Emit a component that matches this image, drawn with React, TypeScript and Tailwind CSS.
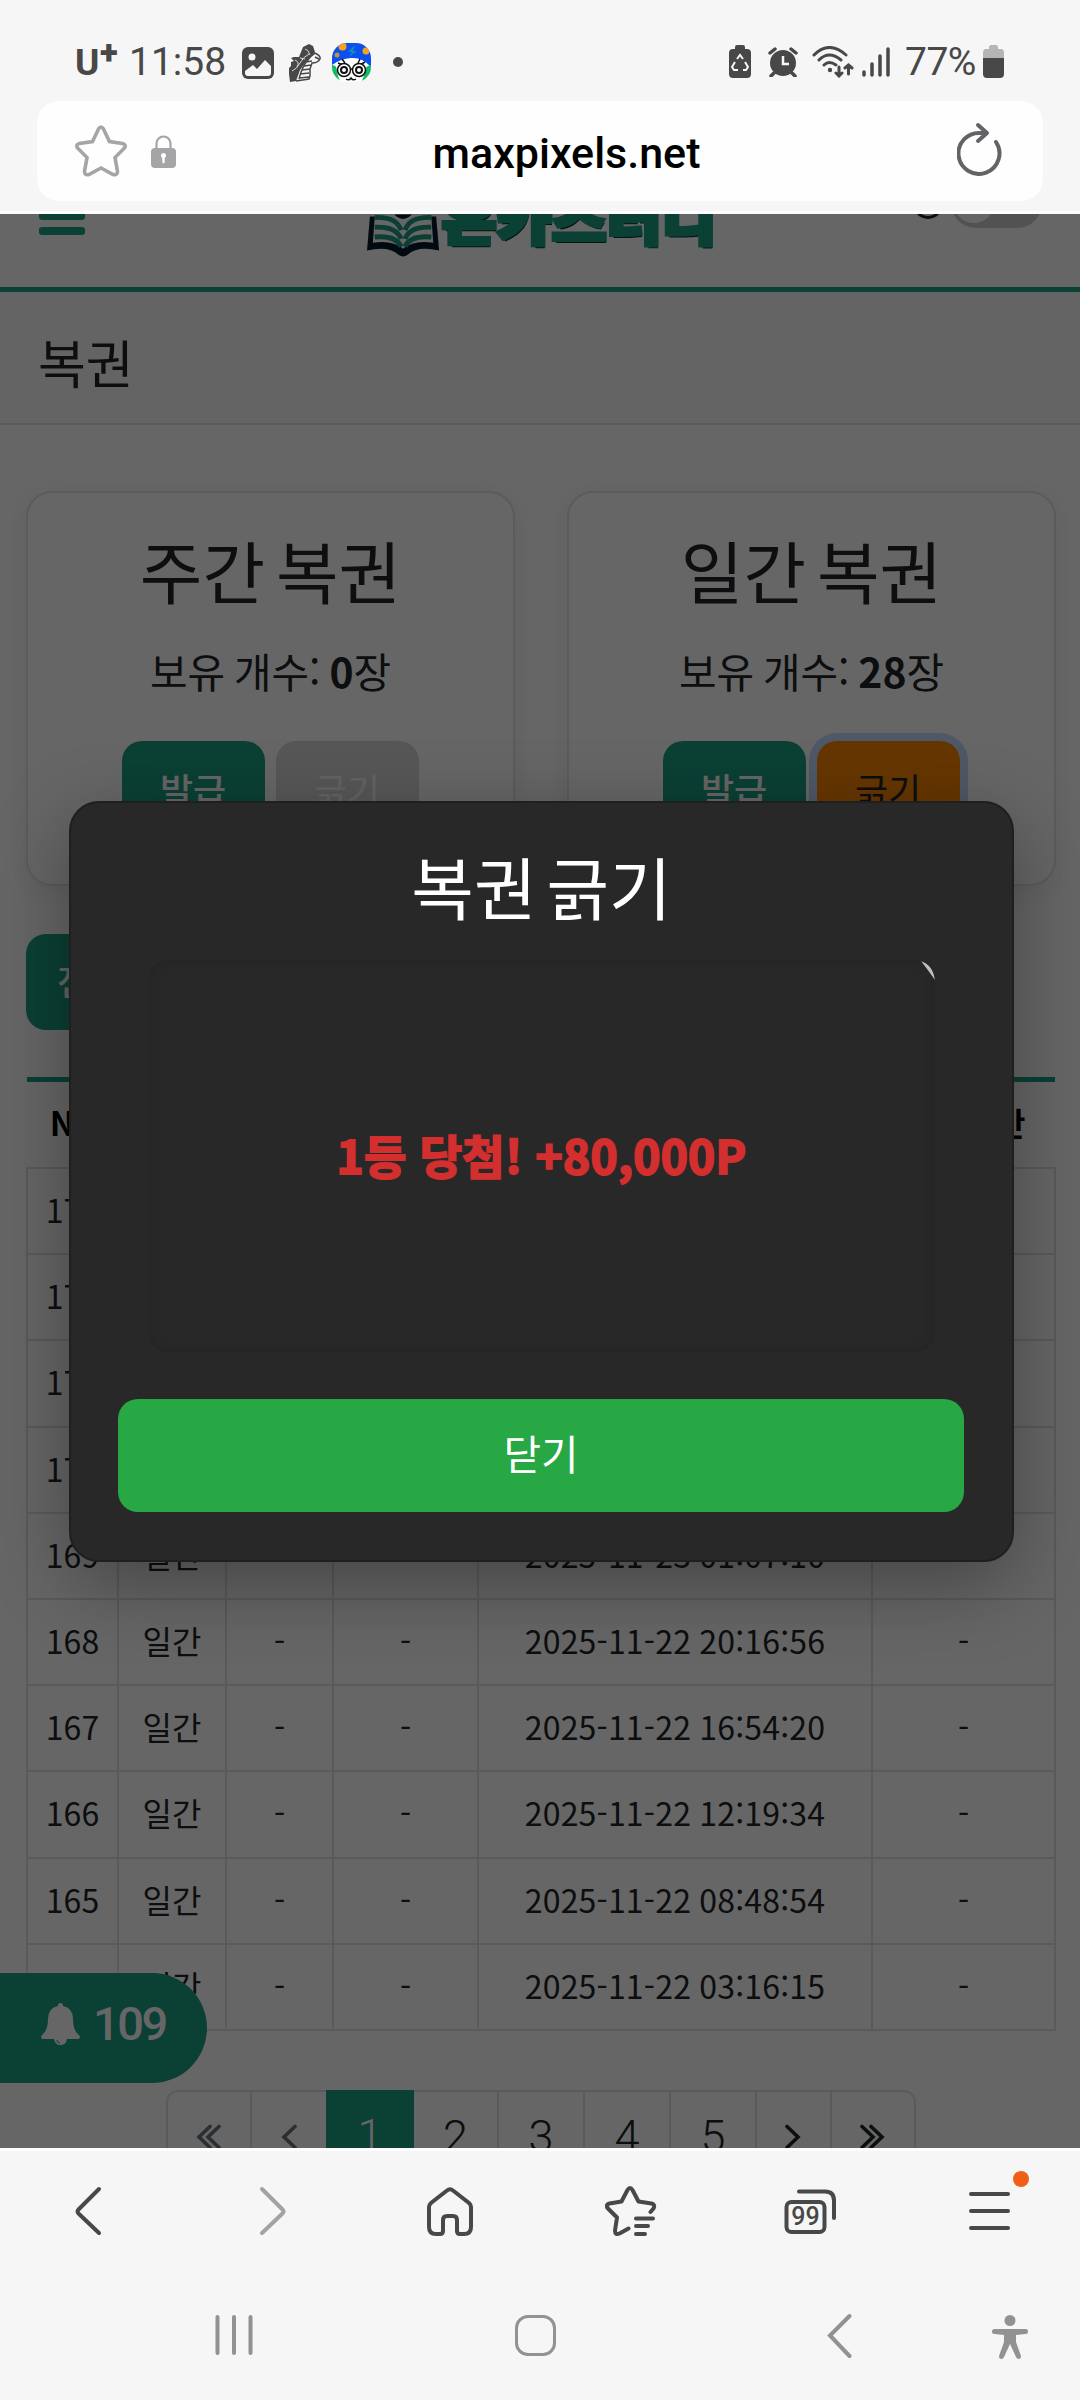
import React from "react";
import clsx from "clsx";

const KR = "font-['Noto_Sans_CJK_KR',sans-serif]";

const history = [
  { no: 173, date: "2025-11-24 08:31:12" },
  { no: 172, date: "2025-11-23 21:45:20" },
  { no: 171, date: "2025-11-23 16:22:08" },
  { no: 170, date: "2025-11-23 11:20:31" },
  { no: 169, date: "2025-11-23 01:07:10" },
  { no: 168, date: "2025-11-22 20:16:56" },
  { no: 167, date: "2025-11-22 16:54:20" },
  { no: 166, date: "2025-11-22 12:19:34" },
  { no: 165, date: "2025-11-22 08:48:54" },
  { no: 164, date: "2025-11-22 03:16:15" },
];

const columns = "grid grid-cols-[91px_108px_107px_145px_394px_183px]";

function StatusBar() {
  return (
    <div className="flex h-[101px] items-start pt-[43px] pl-[75px] text-[#484848] font-['Roboto',sans-serif]">
      <span className="text-[37px] font-bold leading-[36px] mt-[2px] w-[25px]">
        U
      </span>
      <span className="text-[33px] font-black leading-[20px] w-[18px]">+</span>
      <span className="text-[39px] leading-[38px] w-[98px] ml-[11px]">
        11:58
      </span>
      <svg className="w-8 h-8 mt-1 ml-[15px]" viewBox="0 0 32 32">
        <rect width="32" height="32" rx="6" fill="#484848" />
        <circle cx="10" cy="10" r="3.5" fill="#f6f6f6" />
        <path
          d="M3 24l8-6 4 4 8-9 6 6v7a3 3 0 0 1-3 3H6a3 3 0 0 1-3-3z"
          fill="#f6f6f6"
        />
      </svg>
      <svg className="w-8 h-10 ml-[15px]" viewBox="0 0 32 40">
        <path
          d="M0 25l2-2v-4l3-1-3-3 3-1 5 0 4-10 6-3 4 2 2 6-3 4-7 7-5 7-4 11-6 1-1-8z"
          fill="#484848"
        />
        <path
          d="M26 10q6 3 5 6-2 4-8 4l-2 6v7l-1 3-13 2M26 10q-5 3-8 8-5 6-8 18M23 18l-6 1M22 22l-7 1M21 26l-8 1M20 30l-9 1M20 34l-10 1M26 14l4 2"
          fill="none"
          stroke="#484848"
          strokeWidth="1.500"
        />
        <path
          d="M16 6q3 0 5 6M6 17q5 2 2 7M3 28q5-2 8-8t9-9M11 15l5 1"
          fill="none"
          stroke="#d8d8d8"
          strokeWidth="1"
        />
      </svg>
      <svg className="w-[39px] h-[39px] ml-[11px]" viewBox="0 0 39 39">
        <clipPath id="avatar">
          <rect width="39" height="39" rx="15" />
        </clipPath>
        <g clipPath="url(#avatar)">
          <rect width="39" height="39" fill="#fff" />
          <path d="M0 0h39v24Q30 14 19 15T0 22z" fill="#0b50ee" />
          <path
            d="M0 22q5 0 5 6 1 7 4 11H0zM39 22q-6 1-6 6-1 7-4 11h10z"
            fill="#12bd62"
          />
          <circle cx="10.500" cy="3.500" r="4" fill="#f2a51c" />
          <circle cx="34" cy="8" r="3.500" fill="#f2a51c" />
          <circle cx="5" cy="12" r="2.500" fill="#b8963f" />
          <path d="M23 2l-7 7h4l-3 5 8-6h-4z" fill="#0d8fb8" />
          <path
            d="M6 20l5 2M10 16l3 4M33 19l-5 3M28 16l-2 4"
            stroke="#111"
            strokeWidth="1.500"
          />
          <g fill="#fff" stroke="#111" strokeWidth="1.500">
            <circle cx="12" cy="27" r="6.500" />
            <circle cx="27" cy="27" r="6.500" />
            <circle cx="12" cy="27" r="3" strokeWidth="2" />
            <circle cx="27" cy="27" r="3" strokeWidth="2" />
          </g>
          <path
            d="M14 36q3 2 5-1 2 3 5 1M18 26h3"
            fill="none"
            stroke="#111"
            strokeWidth="1.500"
          />
        </g>
      </svg>
      <span className="size-[10px] rounded-full bg-[#484848] mt-[14px] ml-[22px]" />

      <div className="ml-auto mr-[76px] flex items-start">
        <svg className="w-[22px] h-[33px] mt-[2px]" viewBox="0 0 22 33">
          <path
            d="M6 4V2q0-2 2-2h6q2 0 2 2v2h2q4 0 4 4v21q0 4-4 4H4q-4 0-4-4V8q0-4 4-4z"
            fill="#484848"
          />
          <path d="M11 13l5 8h-3v4H9v-4H6z" fill="#484848" />
          <path
            d="M8 14l3-4 3 4M16 17l3 5-2 3h-3M9 25H5l-2-3 3-5"
            fill="none"
            stroke="#f6f6f6"
            strokeWidth="2"
          />
        </svg>
        <svg className="w-[30px] h-[30px] mt-1 ml-[17px]" viewBox="0 0 30 30">
          <circle cx="15" cy="16" r="13" fill="#484848" />
          <path
            d="M2 6l5-4M28 6l-5-4M6 26l-3 3M24 26l3 3"
            stroke="#484848"
            strokeWidth="3.500"
            strokeLinecap="round"
          />
          <path
            d="M15 9v8h6"
            fill="none"
            stroke="#f6f6f6"
            strokeWidth="2.500"
          />
        </svg>
        <svg className="w-[42px] h-8 mt-[3px] ml-[14px]" viewBox="0 0 42 32">
          <g
            fill="none"
            stroke="#484848"
            strokeWidth="3"
            strokeLinecap="round"
          >
            <path d="M2 9q15-15 32 0M7 14q10-10 22 0M12 19q5-5 12 0" />
            <path d="M27 21v9M24 27l3 3 3-3M36.500 28V19M33 22l3.500-3 3.500 3" />
          </g>
          <circle cx="18" cy="24" r="2.200" fill="#484848" />
        </svg>
        <svg className="w-7 h-[30px] mt-1 ml-[8px]" viewBox="0 0 28 30">
          <path
            d="M2 25v3M10 17v11M18 9v19M26 2v26"
            stroke="#484848"
            strokeWidth="3.500"
            strokeLinecap="round"
          />
        </svg>
        <span className="text-[39px] leading-[38px] w-[78px] ml-[15px] tracking-[-0.5px]">
          77%
        </span>
        <svg className="w-[21px] h-[33px] mt-[2px]" viewBox="0 0 21 33">
          <path
            d="M6 4V2q0-2 2-2h5q2 0 2 2v2h3q3 0 3 4v6H0V8q0-4 3-4z"
            fill="#b5b5b5"
          />
          <path d="M0 13h21v16q0 4-4 4H4q-4 0-4-4z" fill="#484848" />
        </svg>
      </div>
    </div>
  );
}

function AddressBar() {
  return (
    <div className="h-[113px] border-b-[3px] border-[#fdfdfd] px-[37px]">
      <div className="flex h-[100px] items-center rounded-[22px] bg-[#fefefe] px-[38px]">
        <svg className="w-[52px] h-[52px]" viewBox="0 0 52 52">
          <path
            d="M23.500 4q2.500-4 5 0l6 12.500 13 2q4 1 2 4.500l-9.500 9.500 2.500 14q0 4-4.500 3L26 43l-12 6.500q-4.500 1-4.500-3L12 32.500 2.500 23q-2-3.500 2-4.500l13-2z"
            fill="none"
            stroke="#a5a5a7"
            strokeWidth="3.600"
          />
        </svg>
        <svg className="w-[25px] h-[33px] ml-6" viewBox="0 0 25 33">
          <path
            d="M5.500 14V8.500a7 7 0 0 1 14 0V14"
            fill="none"
            stroke="#a5a5a7"
            strokeWidth="2.200"
          />
          <rect y="13" width="25" height="20" rx="4" fill="#a5a5a7" />
          <circle cx="12.500" cy="20.500" r="2.500" fill="#fff" />
          <path
            d="M12.500 21v6"
            stroke="#fff"
            strokeWidth="2.500"
            strokeLinecap="round"
          />
        </svg>
        <span className="mt-[4px] flex-1 text-center font-['Roboto',sans-serif] text-[43px] font-medium text-black">
          maxpixels.net
        </span>
        <svg className="w-[46px] h-[54px] mr-[2px] -mt-1" viewBox="0 0 46 54">
          <g
            fill="none"
            stroke="#636367"
            strokeWidth="4"
            strokeLinecap="round"
            strokeLinejoin="round"
          >
            <path d="M39 20a20.500 20.500 0 1 1-15-9h5" />
            <path d="M21 3l9 8-9 8" />
          </g>
        </svg>
      </div>
    </div>
  );
}

function SiteHeader() {
  return (
    <header className="h-[78px] overflow-hidden border-b-[5px] border-[#1ca083] bg-white">
      <div className="flex h-[73px] items-start">
        <div className="ml-[39px] w-[46px]">
          <div className="h-[6px] rounded-b-[3px] bg-[#1ca083]" />
          <div className="mt-[7px] h-2 rounded-[3px] bg-[#1ca083]" />
        </div>
        <div className="ml-[282px] flex w-[350px] items-start">
          <svg className="w-[74px] h-[44px]" viewBox="0 0 74 44">
            <path
              d="M3 2L0 37q22-5 32 4 5 4 10 0 10-9 32-4L71 2h-5l2 27q-20-3-31 6-11-9-31-6L8 2z"
              fill="#061a2c"
            />
            <path d="M28 0q9 9 18 0z" fill="#061a2c" />
            <g fill="none" stroke="#1f9c82" strokeWidth="5">
              <path d="M8 3q22-1 27 13M66 3Q44 2 39 16" />
              <path d="M8 13q22-1 27 12M66 13q-22-1-27 12" />
              <path d="M8 23q22-2 27 10M66 23q-22-2-27 10" />
            </g>
          </svg>
          <span
            className={clsx(
              KR,
              "-mt-[46px] ml-[3px] origin-bottom scale-y-[0.83] whitespace-nowrap text-[59px] font-black leading-[88px] tracking-[0.700px] text-[#1ca083] [-webkit-text-stroke:5px_#1ca083] [text-shadow:1px_1px_0_#6ab5a4,-1px_-1px_0_#6ab5a4,1px_-1px_0_#6ab5a4,-1px_1px_0_#6ab5a4,2px_3px_0_#06382c]"
            )}
          >
            온카스터디
          </span>
        </div>
        <div className="-mt-[25px] ml-[196px] size-[30px] rounded-full border-[3px] border-[#212529]" />
        <div className="-mt-[36px] ml-[8px] h-[50px] w-[91px] rounded-full bg-[#cccccc] p-[5px] pl-[3px]">
          <div className="size-[40px] rounded-full bg-white" />
        </div>
      </div>
    </header>
  );
}

type CardProps = {
  title: string;
  count: number;
  active?: boolean;
};

function LotteryCard({ title, count, active }: CardProps) {
  return (
    <div className="h-[395px] w-[489px] rounded-[26px] border-2 border-[#e3e4e6] bg-white text-center text-[#212529] shadow-[0_6px_26px_rgba(0,0,0,0.07)]">
      <h2 className="mt-[35px] text-[68px] leading-[83px] [word-spacing:-8px]">
        {title}
      </h2>
      <p className="mt-[35px] text-[40.800px] leading-[50px] [word-spacing:-2.500px]">
        보유 개수: <b>{count}</b>장
      </p>
      <div className="mt-[45px] flex justify-center gap-[11px] pr-[1px] text-[36px] leading-[97px]">
        <button className="h-[104px] w-[143px] rounded-[20px] bg-[#1ca083] pb-[7px] font-medium text-white">
          발급
        </button>
        <button
          className={clsx(
            "h-[104px] w-[143px] rounded-[20px] pb-[7px]",
            active
              ? "bg-[#ff8800] text-[#212529] ring-8 ring-[#c2dbff]"
              : "bg-[#dadada] text-[#f7f7f7]"
          )}
        >
          긁기
        </button>
      </div>
    </div>
  );
}

function HistoryTable() {
  return (
    <div className="mt-[47px] ml-[26px] w-[1030px] text-center text-[32px] text-[#212529]">
      <div
        className={clsx(
          columns,
          "ml-px mr-px border-t-[5px] border-[#1ca083] text-[33px] font-bold leading-[80px] h-[90px] text-black"
        )}
      >
        <span>No</span>
        <span>구분</span>
        <span>등수</span>
        <span>포인트</span>
        <span>발급 시간</span>
        <span className="text-[32px] [word-spacing:-3px]">사용 시간</span>
      </div>
      <div className="border-t-2 border-l-2 border-[#dee2e6]">
        {history.map(({ no, date }) => (
          <div
            key={no}
            className={clsx(
              columns,
              "h-[86.200px] leading-[80px] [&>span]:border-r-2 [&>span]:border-b-2 [&>span]:border-[#dee2e6]"
            )}
          >
            <span>{no}</span>
            <span>일간</span>
            <span>-</span>
            <span>-</span>
            <span className="tracking-[0.200px] [word-spacing:-1px]">
              {date}
            </span>
            <span>-</span>
          </div>
        ))}
      </div>
    </div>
  );
}

function Chevrons({ double, flip }: { double?: boolean; flip?: boolean }) {
  return (
    <svg
      className={clsx(
        "h-[28px]",
        double ? "w-[26px]" : "w-[17px]",
        flip && "-scale-x-100"
      )}
      viewBox={double ? "0 0 26 28" : "0 0 17 28"}
      fill="none"
      stroke={flip ? "#212529" : "#6c757d"}
      strokeWidth="3.600"
      strokeLinecap="round"
    >
      <path d="M14 3.500L3 14l11 10.500" />
      {double && <path d="M23 3.500L12 14l11 10.500" />}
    </svg>
  );
}

function Pagination() {
  return (
    <div className="mt-[59px] ml-[166px] flex h-[94px] w-[750px] rounded-[12px] border-2 border-[#dee2e6] text-[45px] font-light leading-[90px] text-[#212529] font-['Roboto',sans-serif] [&>div]:flex [&>div]:items-center [&>div]:justify-center [&>div]:border-[#dee2e6]">
      <div className="w-[84px] border-r-2">
        <Chevrons double />
      </div>
      <div className="w-[74px]">
        <Chevrons />
      </div>
      <div className="-mt-[2px] w-[88px] bg-[#1ca083] text-white">1</div>
      <div className="w-[85px] border-r-2">2</div>
      <div className="w-[86px] border-r-2">3</div>
      <div className="w-[86px] border-r-2">4</div>
      <div className="w-[86px] border-r-2">5</div>
      <div className="w-[75px] border-r-2 pr-[3px]">
        <Chevrons flip />
      </div>
      <div className="flex-1 pr-[3px]">
        <Chevrons double flip />
      </div>
    </div>
  );
}

function NoticeBadge() {
  return (
    <div className="absolute left-0 top-[1759px] flex h-[110px] w-[207px] items-center rounded-r-full bg-[#1ca083] pl-[41px] text-white">
      <svg className="-mt-[8px] h-[43px] w-[39px]" viewBox="0 0 39 43">
        <path
          d="M19.500 0q2.500 0 2.500 3 10 2 10 13 0 11 5 15 2 2 2 3 0 2-2 2H26q-1 6-6.500 6T13 36H2q-2 0-2-2 0-1 2-3 5-4 5-15Q7 5 17 3q0-3 2.500-3z"
          fill="#fff"
        />
        <path
          d="M16 37q0 3 3 3"
          fill="none"
          stroke="#1ca083"
          strokeWidth="1"
        />
      </svg>
      <span className="-mt-[7px] ml-[13px] font-['Roboto',sans-serif] text-[47px] font-medium tracking-[-2.500px]">
        109
      </span>
    </div>
  );
}

function ScratchModal() {
  return (
    <div className="absolute inset-0 flex items-start justify-center bg-black/60 pt-[587px] pl-[3px]">
      <div className="flex h-[761px] w-[945px] flex-col rounded-[30px] border-2 border-[#1f1f1f] bg-[#282828] shadow-[0_22px_80px_rgba(0,0,0,0.33)]">
        <h1 className="mt-[44px] text-center text-[68px] leading-[78px] text-white [word-spacing:-9px]">
          복권 긁기
        </h1>
        <div className="relative ml-[77px] mt-[35px] flex h-[392px] w-[787px] items-center justify-center overflow-hidden rounded-[20px] shadow-[inset_0_0_12px_rgba(0,0,0,0.12)]">
          <span className="-mt-[4px] text-[46px] font-bold tracking-[0.300px] text-[#d32f2f] [-webkit-text-stroke:2px_#d32f2f]">
            1등 당첨! +80,000P
          </span>
          {/* unscratched corner of the cover */}
          <svg
            className="absolute right-0 top-0 h-[22px] w-[16px]"
            viewBox="0 0 16 22"
          >
            <path d="M2 1Q14 5 16 20 9 10 2 1z" fill="#bdbdbd" />
          </svg>
        </div>
        <button className="ml-[47px] mt-[47px] h-[113px] w-[846px] rounded-[20px] bg-[#28a745] pb-[6px] text-[40.800px] text-white">
          닫기
        </button>
      </div>
    </div>
  );
}

function BrowserToolbar() {
  return (
    <div className="flex h-[124px] items-start border-t-[3px] border-[#fdfdfd] pt-[34px] pl-[73px]">
      <svg className="w-[30px] h-[54px]" viewBox="0 0 30 54" fill="none">
        <path
          d="M26 4L5.500 24.500q-2 2 0 4L26 48"
          stroke="#484848"
          strokeWidth="4"
          strokeLinecap="round"
        />
      </svg>
      <svg
        className="w-[30px] h-[54px] ml-[155px]"
        viewBox="0 0 30 54"
        fill="none"
      >
        <path
          d="M4 4l20.500 20.500q2 2 0 4L4 48"
          stroke="#a3a3a3"
          strokeWidth="4"
          strokeLinecap="round"
        />
      </svg>
      <svg
        className="w-[46px] h-[50px] ml-[139px] mt-[2px]"
        viewBox="0 0 46 50"
        fill="none"
      >
        <path
          d="M20 3.500q3-2.500 6 0L42 16q2 2 2 4v20q0 7-7 7h-4q-3 0-3-3V33q0-4-4-4h-6q-4 0-4 4v11q0 3-3 3H9q-7 0-7-7V20q0-2 2-4z"
          stroke="#484848"
          strokeWidth="4"
        />
      </svg>
      <svg
        className="w-[52px] h-[54px] ml-[132px]"
        viewBox="0 0 52 54"
        fill="none"
      >
        <path
          d="M45.500 27l3-3.500q2-4-2-5l-13-2L27.500 5q-2.500-4-5 0l-6 11.500-12 2q-4 1-2 4.500l9.500 9.500-2 13q0 5 4.500 3l9-5"
          stroke="#484848"
          strokeWidth="4"
          strokeLinecap="round"
          strokeLinejoin="round"
        />
        <path
          d="M31 33.500h17M31 41h12M31 49h9"
          stroke="#484848"
          strokeWidth="4"
          strokeLinecap="round"
        />
      </svg>
      <div className="relative ml-[127px] h-[50px] w-[54px]">
        <svg className="w-[54px] h-[50px]" viewBox="0 0 54 50" fill="none">
          <rect
            x="2.500"
            y="17"
            width="38"
            height="30"
            rx="5"
            stroke="#484848"
            strokeWidth="4"
          />
          <path
            d="M15 6.500h26q9 0 9 9V33"
            stroke="#484848"
            strokeWidth="4"
            strokeLinecap="round"
          />
        </svg>
        <span className="absolute left-[2px] top-[16px] w-[39px] text-center font-['Roboto',sans-serif] text-[25px] font-medium leading-[31px] text-[#484848]">
          99
        </span>
      </div>
      <div className="relative ml-[131px] mt-[7px] flex w-[41px] flex-col gap-[13px]">
        <div className="h-1 rounded-full bg-[#484848]" />
        <div className="h-1 rounded-full bg-[#484848]" />
        <div className="h-1 rounded-full bg-[#484848]" />
        <div className="absolute -top-[21px] left-[44px] size-4 rounded-full bg-[#ef6015]" />
      </div>
    </div>
  );
}

function SystemNav() {
  return (
    <div className="flex h-[128px] items-start pt-[41px] pl-[215px]">
      <svg className="w-[38px] h-[44px]" viewBox="0 0 38 44">
        <path
          d="M2.500 4v36M19 4v36M35.500 4v36"
          stroke="#929292"
          strokeWidth="4"
          strokeLinecap="round"
        />
      </svg>
      <div className="mt-[2px] ml-[262px] size-[41px] rounded-[13px] border-[3.500px] border-[#929292]" />
      <svg
        className="w-[26px] h-[46px] ml-[270px]"
        viewBox="0 0 26 46"
        fill="none"
      >
        <path
          d="M23.500 3L4 22.500 23.500 43"
          stroke="#929292"
          strokeWidth="4"
          strokeLinecap="round"
        />
      </svg>
      <svg
        className="w-[36px] h-[46px] ml-[140px] mt-[2px]"
        viewBox="0 0 36 46"
      >
        <circle cx="18" cy="5.500" r="5.500" fill="#929292" />
        <path
          d="M2.500 14h31a2.500 2.500 0 0 1 0 5l-9.500 1v7l5 14q0 3-2.500 3-1.500 0-2.500-2l-6-13-6 13q-1 2-2.500 2Q7 44 7 41l5-14v-7l-9.500-1a2.500 2.500 0 0 1 0-5z"
          fill="#929292"
        />
      </svg>
    </div>
  );
}

export default function App() {
  return (
    <div
      lang="ko"
      className="flex h-[2400px] w-[1080px] flex-col overflow-hidden bg-[#f6f6f6]"
    >
      <StatusBar />
      <AddressBar />
      <main className={clsx(KR, "relative h-[1934px] overflow-hidden bg-white")}>
        <SiteHeader />
        <div className="h-[133px] border-b-2 border-[#dee2e6] bg-[#fafafa] pl-[38px] text-[52px] leading-[139px] text-[#212529]">
          복권
        </div>
        <div className="flex justify-between pt-[66px] pr-[24px] pl-[26px]">
          <LotteryCard title="주간 복권" count={0} />
          <LotteryCard title="일간 복권" count={28} active />
        </div>
        <button className="mt-[48px] ml-[26px] block h-[96px] w-[128px] rounded-[20px] bg-[#1ca083] pb-[4px] text-[36px] font-medium text-white">
          전체
        </button>
        <HistoryTable />
        <Pagination />
        <NoticeBadge />
        <ScratchModal />
      </main>
      <BrowserToolbar />
      <SystemNav />
    </div>
  );
}
